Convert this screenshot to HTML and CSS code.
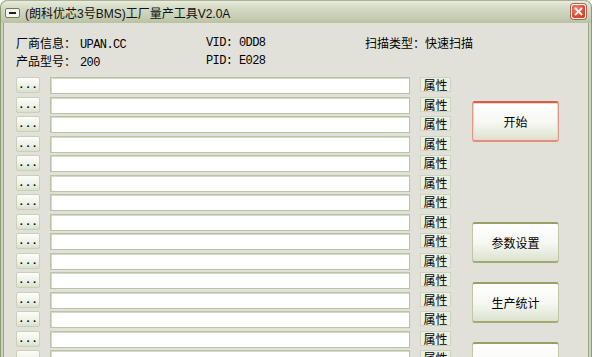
FILE: index.html
```html
<!DOCTYPE html>
<html lang="zh-CN">
<head>
  <meta charset="UTF-8" />
  <meta name="viewport" content="width=device-width, initial-scale=1.0"/>
  <title>(朗科优芯3号BMS)工厂量产工具V2.0A</title>
  <link rel="stylesheet" href="styles.css">
</head>
<body>

  <div class="window">
    <div class="titlebar">
      <span class="sysicon"><span class="dash"></span></span>
      <span class="title">(朗科优芯3号BMS)工厂量产工具V2.0A</span>
      <span class="close">
        <svg width="13" height="13" viewBox="0 0 13 13">
          <path d="M3 3 L10 10 M10 3 L3 10" stroke="#fff" stroke-width="2" stroke-linecap="square"/>
        </svg>
      </span>
    </div>

    <div class="client">
      <div class="info">
        <div>厂商信息：<span class="mono">UPAN.CC</span></div>
        <div class="mono">VID: 0DD8</div>
        <div>扫描类型：快速扫描</div>
        <div>产品型号：<span class="mono">200</span></div>
        <div class="mono">PID: E028</div>
        <div></div>
      </div>

      <div class="main">
        <div class="ports" id="ports"></div>

        <div class="actions">
          <button class="big default">开始</button>
          <button class="big setup">参数设置</button>
          <button class="big">生产统计</button>
          <button class="big">退出</button>
        </div>
      </div>
    </div>
  </div>

  <script>
    const ports = document.getElementById("ports");
    for (let i = 0; i < 16; i++) {
      const row = document.createElement("div");
      row.className = "port";
      row.innerHTML =
        '<button class="browse">...</button>' +
        '<input type="text" class="path" />' +
        '<button class="prop">属性</button>';
      ports.appendChild(row);
    }
  </script>

</body>
</html>
```

FILE: styles.css
```css
body {
  margin: 0;
  background: #fff;
  overflow: hidden;
  font-family: "Liberation Sans", "Noto Sans CJK SC", sans-serif;
  font-size: 12px;
  color: #000;
}

.window {
  width: 592px;
  height: 420px;
  box-sizing: border-box;
  border: 1px solid #8d9b72;
  border-top: 0;
  border-radius: 7px 7px 0 0;
  background: #cdd4bd;
  padding: 0 2px;
}

.titlebar {
  height: 23px;
  margin: 0 -2px;
  display: flex;
  align-items: center;
  padding: 0 5px 0 4px;
  border-radius: 7px 7px 0 0;
  background: linear-gradient(#e8ebde, #d3d9c3 35%, #c8cfb6 70%, #b9c2a3);
  border-top: 1px solid #a9b38f;
  box-sizing: border-box;
}

.sysicon {
  width: 15px;
  height: 10px;
  box-sizing: border-box;
  border: 1px solid #707a5c;
  border-radius: 2px;
  background: #f4f5ee;
  display: flex;
  align-items: center;
  justify-content: center;
  margin-top: 2px;
}

.sysicon .dash {
  width: 7px;
  height: 2px;
  background: #222;
}

.title {
  margin-left: 5px;
  color: #111;
  flex: 1;
}

.close {
  width: 15px;
  height: 15px;
  box-sizing: border-box;
  border: 1px solid #fff;
  border-radius: 3px;
  background: radial-gradient(circle at 35% 30%, #f08a72, #d94a34 60%, #c13a24);
  box-shadow: 0 0 0 1px #b0604e;
  display: flex;
  align-items: center;
  justify-content: center;
  margin-top: -1px;
}

.close svg {
  width: 11px;
  height: 11px;
}

.client {
  height: 100%;
  background: #e2e1d9;
  border-left: 1px solid #98a67e;
  border-right: 1px solid #98a67e;
  padding: 11px 0 0 12px;
  box-sizing: border-box;
}

.mono {
  font-family: "Liberation Mono", monospace;
  font-size: 12px;
  letter-spacing: -0.6px;
}

.info span.mono {
  margin-left: 4px;
}

.info {
  display: grid;
  grid-template-columns: 190px 159px auto;
  grid-auto-rows: 18px;
  line-height: 18px;
  font-family: "Noto Sans CJK SC", sans-serif;
}

.main {
  display: flex;
  margin-top: 7px;
}

.ports {
  display: flex;
  flex-direction: column;
  gap: 2.5px;
}

.port {
  display: grid;
  grid-template-columns: 24px 360px 31px;
  column-gap: 10px;
  align-items: start;
  height: 17px;
}

.browse {
  height: 16px;
  padding: 0;
  border: 1px solid #c9d0ba;
  border-radius: 2px;
  background: linear-gradient(#fdfdfa, #eef1e6 60%, #d9e0cb);
  font-family: "Liberation Mono", monospace;
  font-size: 11px;
  font-weight: bold;
  line-height: 14px;
  color: #000;
}

.path {
  height: 17px;
  box-sizing: border-box;
  margin: 0;
  padding: 0 3px;
  border: 1px solid #b9c4a6;
  box-shadow: inset 1px 1px #d2d9c5;
  background: #fff;
}

.prop {
  height: 15px;
  padding: 0;
  border: 1px solid #cdd4bf;
  background: #edefe4;
  font-family: "Noto Sans CJK SC", sans-serif;
  font-size: 12px;
  line-height: 13px;
  color: #000;
}

.actions {
  display: flex;
  flex-direction: column;
  margin-left: 21px;
  padding-top: 24px;
  gap: 19px;
}

.big {
  width: 87px;
  height: 41px;
  padding: 0;
  border: 1px solid #c2c6a4;
  border-top: 2px solid #9a9f68;
  border-bottom: 2px solid #a4aa72;
  border-radius: 3px;
  background: linear-gradient(#ffffff, #f7f8f3 50%, #dbe3cf);
  font-family: "Noto Sans CJK SC", sans-serif;
  font-size: 12px;
  color: #000;
}

.big.default {
  border: 1px solid #e29886;
  border-top: 2px solid #d5604b;
  border-bottom: 2px solid #e0907c;
  box-shadow: inset 0 0 0 1px #f6d2c8;
}

.big.setup {
  margin-top: 61px;
}
```
